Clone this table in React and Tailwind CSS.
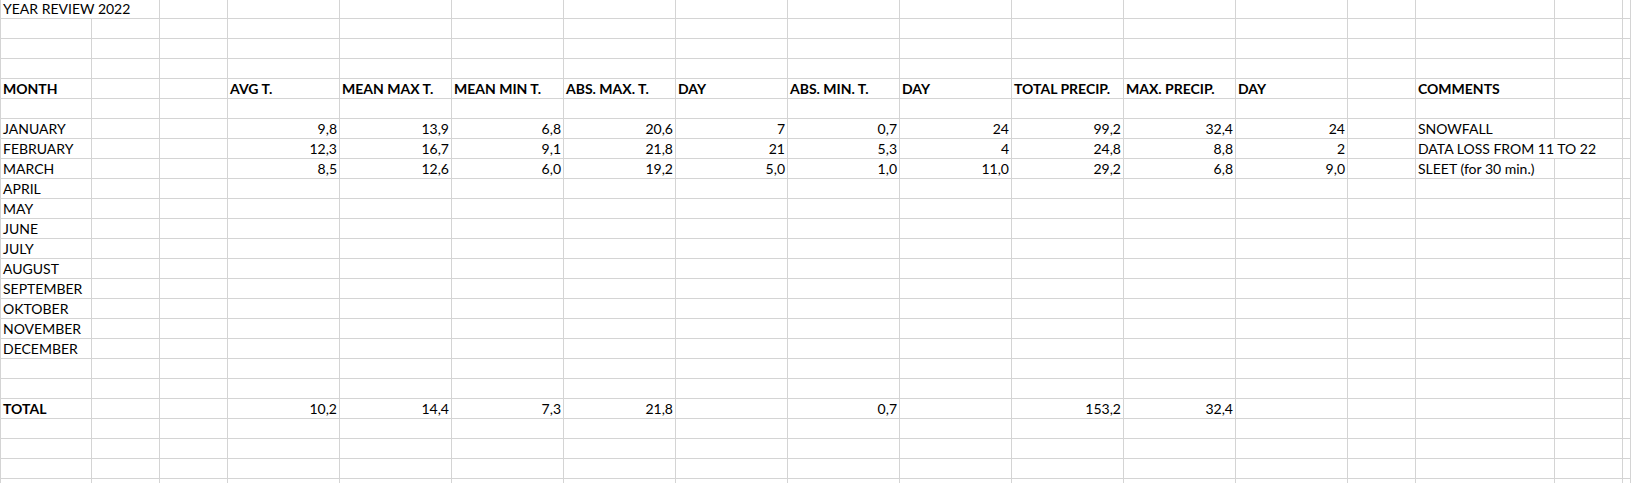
import React from "react";

// sheet columns A..Q, widths include the right grid line
const COLS = 17;

const rows = [
  { cells: { 0: { t: "YEAR REVIEW 2022", span: 2 } } },
  {},
  {},
  {},
  {
    bold: true,
    cells: {
      0: "MONTH",
      3: "AVG T.",
      4: "MEAN MAX T.",
      5: "MEAN MIN T.",
      6: "ABS. MAX. T.",
      7: "DAY",
      8: "ABS. MIN. T.",
      9: "DAY",
      10: "TOTAL PRECIP.",
      11: "MAX. PRECIP.",
      12: "DAY",
      14: "COMMENTS",
    },
  },
  {},
  {
    cells: {
      0: "JANUARY",
      3: "9,8",
      4: "13,9",
      5: "6,8",
      6: "20,6",
      7: "7",
      8: "0,7",
      9: "24",
      10: "99,2",
      11: "32,4",
      12: "24",
      14: "SNOWFALL",
    },
  },
  {
    cells: {
      0: "FEBRUARY",
      3: "12,3",
      4: "16,7",
      5: "9,1",
      6: "21,8",
      7: "21",
      8: "5,3",
      9: "4",
      10: "24,8",
      11: "8,8",
      12: "2",
      14: { t: "DATA LOSS FROM 11 TO 22", span: 2 },
    },
  },
  {
    cells: {
      0: "MARCH",
      3: "8,5",
      4: "12,6",
      5: "6,0",
      6: "19,2",
      7: "5,0",
      8: "1,0",
      9: "11,0",
      10: "29,2",
      11: "6,8",
      12: "9,0",
      14: "SLEET (for 30 min.)",
    },
  },
  ...["APRIL", "MAY", "JUNE", "JULY", "AUGUST", "SEPTEMBER", "OKTOBER", "NOVEMBER", "DECEMBER"].map(
    (m) => ({ cells: { 0: m } })
  ),
  {},
  {},
  {
    cells: {
      0: { t: "TOTAL", bold: true },
      3: "10,2",
      4: "14,4",
      5: "7,3",
      6: "21,8",
      8: "0,7",
      10: "153,2",
      11: "32,4",
    },
  },
  {},
  {},
  {},
  {},
];

const isNum = (t) => /^[\d,]+$/.test(t);

function Cell({ cell, rowBold }) {
  const c = typeof cell === "string" ? { t: cell } : cell || {};
  const text = c.t || "";
  const bold = rowBold || c.bold;
  return (
    <div
      className={
        "h-5 border-r border-b border-[#d4d4d4] px-[2px] leading-[19px] whitespace-nowrap text-black " +
        (c.span ? "col-span-2 " : "") +
        (isNum(text) ? "text-right " : "text-left ") +
        (bold ? "font-bold" : "font-normal")
      }
    >
      {text}
    </div>
  );
}

export default function App() {
  return (
    <div className="h-[483px] w-[1631px] overflow-hidden bg-white">
      <div className="-mt-px grid grid-cols-[91px_68px_68px_112px_112px_112px_112px_112px_112px_112px_112px_112px_112px_68px_139px_68px_8px] border-l border-[#d4d4d4] font-['Lato',sans-serif] text-[14px]">
        {rows.map((row, r) => {
          const out = [];
          for (let c = 0; c < COLS; c++) {
            const cell = row.cells ? row.cells[c] : null;
            out.push(<Cell key={r + "-" + c} cell={cell} rowBold={row.bold} />);
            if (cell && cell.span) c += cell.span - 1;
          }
          return out;
        })}
      </div>
    </div>
  );
}
